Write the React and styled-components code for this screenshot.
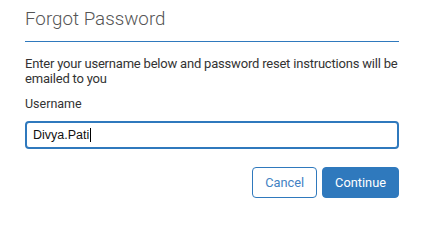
import React from 'react';
import styled, { createGlobalStyle } from 'styled-components';

const blue = '#2f79bd';

const GlobalStyle = createGlobalStyle`
  html, body {
    margin: 0;
    padding: 0;
    background: #ffffff;
  }
  body {
    font-family: Roboto, 'Noto Sans', sans-serif;
    color: #333333;
  }
`;

const Panel = styled.div`
  width: 374px;
  padding: 6px 24px 0 25px;
  display: flex;
  flex-direction: column;
`;

const Title = styled.h1`
  margin: 0;
  font-family: Roboto, sans-serif;
  font-weight: 300;
  font-size: 18.8px;
  line-height: 26px;
  color: #555555;
  padding-bottom: 9px;
  border-bottom: 1px solid ${blue};
`;

const Intro = styled.p`
  margin: 14px 0 0;
  font-size: 13px;
  letter-spacing: -0.2px;
  line-height: 15px;
  color: #333333;
`;

const Label = styled.label`
  margin-top: 10px;
  font-size: 12.5px;
  line-height: 15px;
  color: #333333;
`;

const Field = styled.div`
  margin-top: 10px;
  height: 24px;
  border: 2px solid ${blue};
  border-radius: 4px;
  padding: 0 6px;
  display: flex;
  align-items: center;
  font-family: 'Liberation Sans', Arial, sans-serif;
  font-size: 12.5px;
  color: #111111;
`;

const Caret = styled.span`
  display: inline-block;
  width: 1px;
  height: 14px;
  background: #000000;
  margin-left: 1px;
`;

const Actions = styled.div`
  margin-top: 18px;
  display: flex;
  justify-content: flex-end;
  gap: 5px;
`;

const Button = styled.button`
  height: 31px;
  padding: 0 12px;
  font-family: Roboto, sans-serif;
  font-size: 12.8px;
  border-radius: 4px;
  border: 1px solid ${blue};
  background: ${(p) => (p.$primary ? blue : '#ffffff')};
  color: ${(p) => (p.$primary ? '#ffffff' : '#4382c3')};
  cursor: pointer;
`;

const App = () => (
  <>
    <GlobalStyle />
    <Panel>
      <Title>Forgot Password</Title>
      <Intro>
        Enter your username below and password reset instructions will be emailed to you
      </Intro>
      <Label>Username</Label>
      <Field>
        Divya.Pati
        <Caret />
      </Field>
      <Actions>
        <Button>Cancel</Button>
        <Button $primary>Continue</Button>
      </Actions>
    </Panel>
  </>
);

export default App;
